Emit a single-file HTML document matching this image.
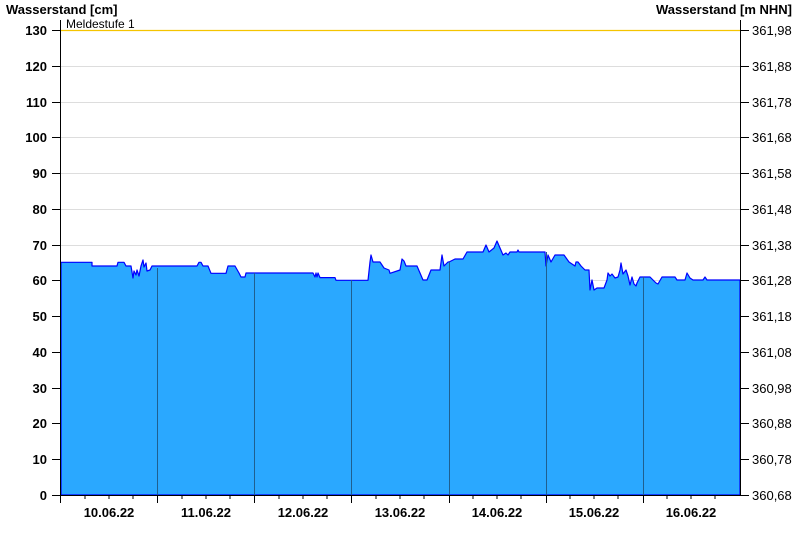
<!DOCTYPE html>
<html><head><meta charset="utf-8"><style>
html,body{margin:0;padding:0;background:#fff;}
svg{display:block;}
text{font-family:"Liberation Sans",Arial,sans-serif;}
</style></head><body>
<svg width="800" height="550" viewBox="0 0 800 550" xmlns="http://www.w3.org/2000/svg">
<rect width="800" height="550" fill="#fff"/>
<!-- grid -->
<g stroke="#dddddd" stroke-width="1">
<line x1="61" y1="66.5" x2="740" y2="66.5"/>
<line x1="61" y1="102.5" x2="740" y2="102.5"/>
<line x1="61" y1="137.5" x2="740" y2="137.5"/>
<line x1="61" y1="173.5" x2="740" y2="173.5"/>
<line x1="61" y1="209.5" x2="740" y2="209.5"/>
<line x1="61" y1="245.5" x2="740" y2="245.5"/>
<line x1="61" y1="280.5" x2="740" y2="280.5"/>
<line x1="61" y1="316.5" x2="740" y2="316.5"/>
<line x1="61" y1="352.5" x2="740" y2="352.5"/>
<line x1="61" y1="388.5" x2="740" y2="388.5"/>
<line x1="61" y1="423.5" x2="740" y2="423.5"/>
<line x1="61" y1="459.5" x2="740" y2="459.5"/>
</g>
<line x1="61" y1="30.5" x2="740" y2="30.5" stroke="#f5c400" stroke-width="1.2"/>
<text x="66" y="28" font-size="12" fill="#000">Meldestufe 1</text>
<!-- data -->
<polygon fill="#2aa8ff" stroke="#0000ff" stroke-width="1.2" stroke-linejoin="round" points="
61,495 61,262.3 92,262.3 92,266 117,266 118,262.3 124,262.3 126,266 131,266 133,278 134,271 136,275 137,270 139,276 141,266 143,260 144,267 146,263 147,271 150,270 152,266 197,266 199,262.3 201,262.3 203,266 208,266 211,273.3 226,273.3 228,266 235,266 239,273 241,277 245,277 246,273 313,273 315,277 316,273 317,277 318,273 320,277.6 335,277.6 336,280.3 368,280.3 370,262 371,255 373,262 380,262 384,268 389,270 390,273.3 
400,270 402,259 404,261 406,266 417,266 420,273 423,280 427,280 431,270 440,270 442,255 444,266 448,262 449,262 455,259 463,259 467,252 483,252 486,245 489,252 494,248 497,241 500,248 503,255 506,253 508,255 510,252 517,252 518,250 519,252 545,252 546,266 548,255 551,262 555,255 564,255 569,262 575,266 576,262 578,262 581,266 585,270 589,270 590,290 592,280 594,290 597,288 604,288 607,280 608,273 610,276 612,274 615,278 618,277 620,270 621,263 623,274 626,270 628,276 630,285 632,277 634,284 636,286 637,283 640,277 650,277 656,283 658,284 662,277 675,277 677,280 685,280 687,273 690,278 693,280 703,280 705,277 707,280 740,280 740,495"/>
<!-- day lines -->
<g stroke="#1f5f8f" stroke-width="1">
<line x1="157.5" y1="268" x2="157.5" y2="495"/>
<line x1="254.5" y1="273" x2="254.5" y2="495"/>
<line x1="351.5" y1="280" x2="351.5" y2="495"/>
<line x1="449.5" y1="262" x2="449.5" y2="495"/>
<line x1="546.5" y1="252" x2="546.5" y2="495"/>
<line x1="643.5" y1="277" x2="643.5" y2="495"/>
</g>
<!-- axes -->
<g stroke="#000" stroke-width="1">
<line x1="60.5" y1="20" x2="60.5" y2="495"/>
<line x1="740.5" y1="20" x2="740.5" y2="495"/>
<line x1="60" y1="495.5" x2="741" y2="495.5"/>
</g>
<g stroke="#000" stroke-width="1" id="lt">
<line x1="52" y1="30.5" x2="60" y2="30.5"/><line x1="52" y1="66.5" x2="60" y2="66.5"/><line x1="52" y1="102.5" x2="60" y2="102.5"/><line x1="52" y1="137.5" x2="60" y2="137.5"/><line x1="52" y1="173.5" x2="60" y2="173.5"/><line x1="52" y1="209.5" x2="60" y2="209.5"/><line x1="52" y1="245.5" x2="60" y2="245.5"/><line x1="52" y1="280.5" x2="60" y2="280.5"/><line x1="52" y1="316.5" x2="60" y2="316.5"/><line x1="52" y1="352.5" x2="60" y2="352.5"/><line x1="52" y1="388.5" x2="60" y2="388.5"/><line x1="52" y1="423.5" x2="60" y2="423.5"/><line x1="52" y1="459.5" x2="60" y2="459.5"/><line x1="52" y1="495.5" x2="60" y2="495.5"/>
</g>
<use href="#lt" x="689"/>
<g stroke="#000" stroke-width="1">
<line x1="60.5" y1="495" x2="60.5" y2="503"/><line x1="157.5" y1="495" x2="157.5" y2="503"/><line x1="254.5" y1="495" x2="254.5" y2="503"/><line x1="351.5" y1="495" x2="351.5" y2="503"/><line x1="449.5" y1="495" x2="449.5" y2="503"/><line x1="546.5" y1="495" x2="546.5" y2="503"/><line x1="643.5" y1="495" x2="643.5" y2="503"/>
<line x1="85" y1="495" x2="85" y2="499"/><line x1="109" y1="495" x2="109" y2="499"/><line x1="133" y1="495" x2="133" y2="499"/>
<line x1="182" y1="495" x2="182" y2="499"/><line x1="206" y1="495" x2="206" y2="499"/><line x1="230" y1="495" x2="230" y2="499"/>
<line x1="279" y1="495" x2="279" y2="499"/><line x1="303" y1="495" x2="303" y2="499"/><line x1="327" y1="495" x2="327" y2="499"/>
<line x1="376" y1="495" x2="376" y2="499"/><line x1="400" y1="495" x2="400" y2="499"/><line x1="424" y1="495" x2="424" y2="499"/>
<line x1="473" y1="495" x2="473" y2="499"/><line x1="497" y1="495" x2="497" y2="499"/><line x1="521" y1="495" x2="521" y2="499"/>
<line x1="570" y1="495" x2="570" y2="499"/><line x1="594" y1="495" x2="594" y2="499"/><line x1="618" y1="495" x2="618" y2="499"/>
<line x1="667" y1="495" x2="667" y2="499"/><line x1="691" y1="495" x2="691" y2="499"/><line x1="715" y1="495" x2="715" y2="499"/>
</g>
<g font-size="13" font-weight="bold" fill="#000">
<text x="6" y="14">Wasserstand [cm]</text>
<text x="792" y="14" text-anchor="end">Wasserstand [m NHN]</text>
</g>
<g font-size="13" font-weight="bold" fill="#000" text-anchor="end">
<text x="47" y="35">130</text><text x="47" y="71">120</text><text x="47" y="107">110</text><text x="47" y="142">100</text><text x="47" y="178">90</text><text x="47" y="214">80</text><text x="47" y="250">70</text><text x="47" y="285">60</text><text x="47" y="321">50</text><text x="47" y="357">40</text><text x="47" y="393">30</text><text x="47" y="428">20</text><text x="47" y="464">10</text><text x="47" y="500">0</text>
</g>
<g font-size="13" fill="#000">
<text x="752" y="35">361,98</text><text x="752" y="71">361,88</text><text x="752" y="107">361,78</text><text x="752" y="142">361,68</text><text x="752" y="178">361,58</text><text x="752" y="214">361,48</text><text x="752" y="250">361,38</text><text x="752" y="285">361,28</text><text x="752" y="321">361,18</text><text x="752" y="357">361,08</text><text x="752" y="393">360,98</text><text x="752" y="428">360,88</text><text x="752" y="464">360,78</text><text x="752" y="500">360,68</text>
</g>
<g font-size="13" font-weight="bold" fill="#000" text-anchor="middle">
<text x="109" y="517">10.06.22</text><text x="206" y="517">11.06.22</text><text x="303" y="517">12.06.22</text><text x="400" y="517">13.06.22</text><text x="497" y="517">14.06.22</text><text x="594" y="517">15.06.22</text><text x="691" y="517">16.06.22</text>
</g>
</svg>
</body></html>
